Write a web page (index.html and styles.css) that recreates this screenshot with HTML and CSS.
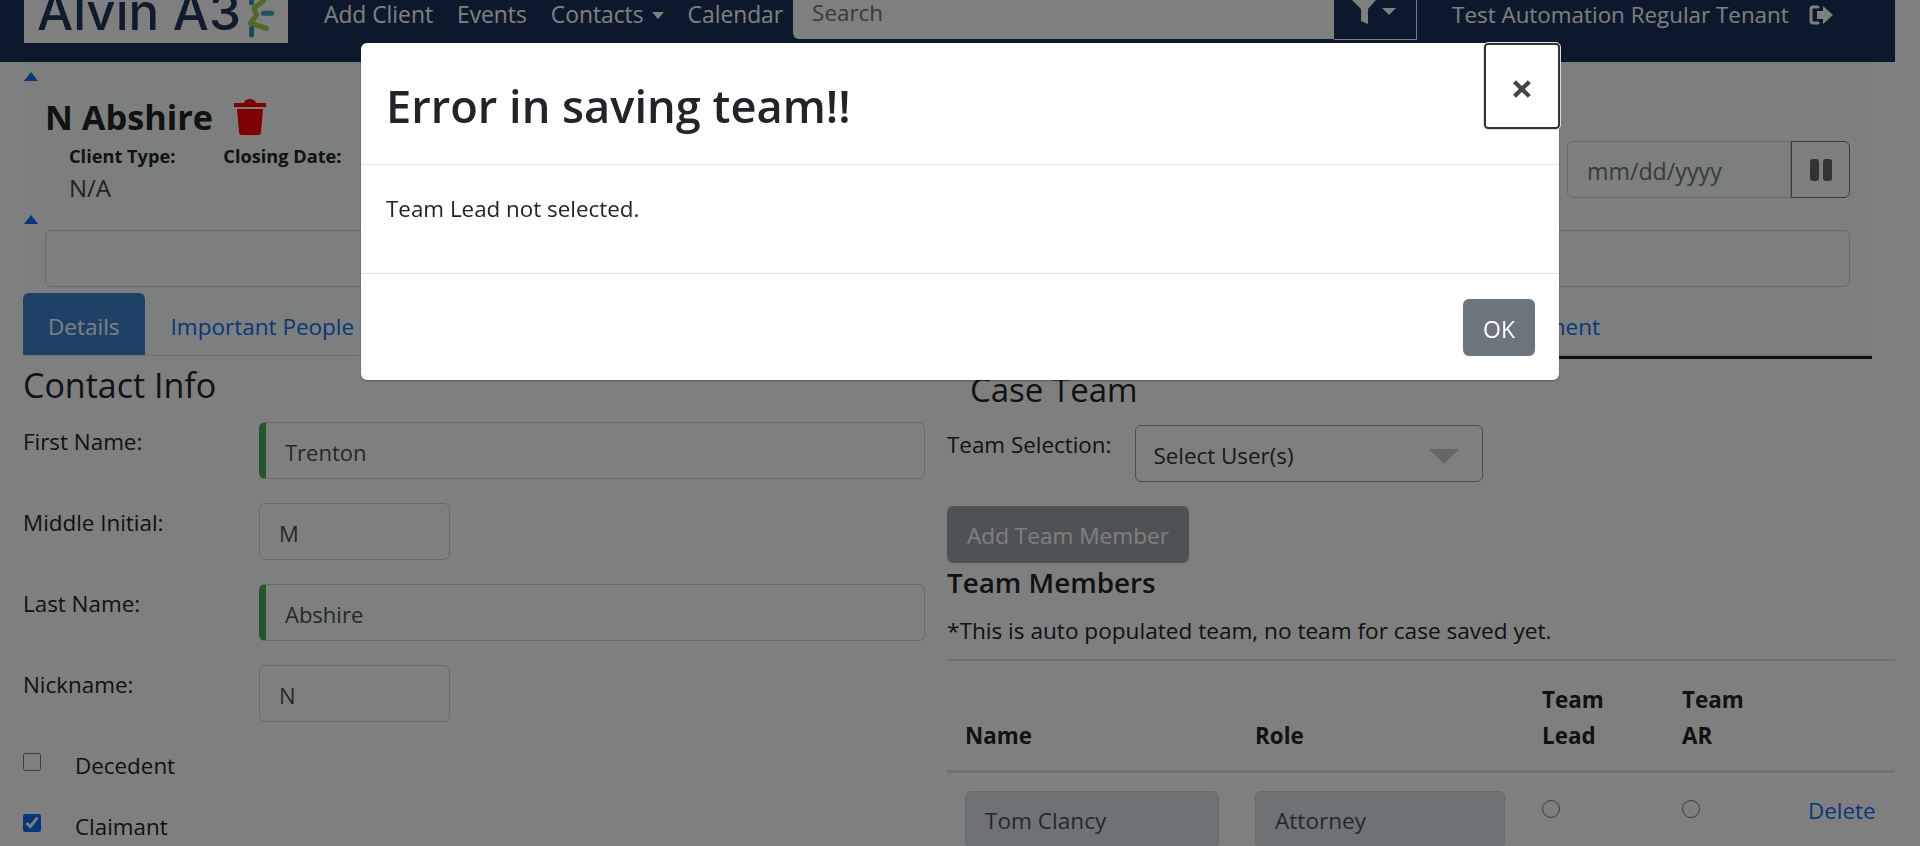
FILE: index.html
```html
<!DOCTYPE html>
<html lang="en">
<head>
  <meta charset="UTF-8">
  <title>Alvin A3</title>
  <link rel="stylesheet" href="styles.css">
</head>
<body>

  <div class="page">
    <!-- Top nav -->
    <div class="topnav">
      <div class="logo">
        <span>Alvin A3</span>
        <svg class="logo-mark" width="28" height="38" viewBox="0 0 28 38">
          <path d="M4.6 -2 V3" stroke="#2a9cb0" stroke-width="5" stroke-linecap="round"/>
          <path d="M16.3 1 L7 8.3 L9.5 15 L3.5 23.3 L19.7 28.5" fill="none" stroke="#a4d24a" stroke-width="5" stroke-linecap="round" stroke-linejoin="round"/>
          <path d="M16.3 13.3 H24.7" stroke="#2fb0c8" stroke-width="5" stroke-linecap="round"/>
          <path d="M4.6 28.3 V35" stroke="#2a9cb0" stroke-width="5" stroke-linecap="round"/>
        </svg>
      </div>
      <a class="navlink link-add">Add Client</a>
      <a class="navlink">Events</a>
      <a class="navlink">Contacts<i class="caret"></i></a>
      <a class="navlink">Calendar</a>
      <div class="search">Search</div>
      <div class="filter">
        <svg width="24" height="24" viewBox="0 0 24 24"><path d="M0 0 H24 L16 9 V24 L9 21 V9 Z" fill="#fff"/></svg>
        <i class="caret"></i>
      </div>
      <div class="tenant">Test Automation Regular Tenant</div>
      <svg class="logout" width="24" height="22" viewBox="0 0 24 22">
        <path d="M9 3 H4 Q2 3 2 5 V17 Q2 19 4 19 H9" fill="none" stroke="#fff" stroke-width="3" stroke-linecap="round"/>
        <path d="M8 7 H14 V2 L24 11 L14 20 V15 H8 Z" fill="#fff"/>
      </svg>
    </div>

    <!-- Client header panel -->
    <div class="panel">
      <div class="toggle"></div>
      <div class="client-row">
        <div>
          <div class="client-name">N Abshire
            <svg class="trash" width="32" height="36" viewBox="0 0 32 36">
              <path d="M0 4 H10 Q11 0 16 0 Q21 0 22 4 H32 V8 H0 Z" fill="#ff0000"/>
              <path d="M3 10 H29 L27 33 Q27 36 24 36 H8 Q5 36 5 33 Z" fill="#ff0000"/>
            </svg>
          </div>
          <div class="client-meta">
            <div class="meta-col">
              <div class="meta-label">Client Type:</div>
              <div class="meta-value">N/A</div>
            </div>
            <div class="meta-col">
              <div class="meta-label">Closing Date:</div>
            </div>
          </div>
        </div>
        <div class="date-group">
          <div class="date-input">mm/dd/yyyy</div>
          <div class="date-btn">
            <svg width="22" height="22" viewBox="0 0 22 22">
              <rect x="0" y="0" width="9" height="22" rx="3" fill="#666"/>
              <rect x="13" y="0" width="9" height="22" rx="3" fill="#666"/>
            </svg>
          </div>
        </div>
      </div>
      <div class="toggle toggle-second"></div>
      <div class="notes"></div>
      <div class="tabs">
        <a class="tab active">Details</a>
        <a class="tab">Important People</a>
        <a class="tab tab-last">Settlement</a>
      </div>
      <div class="tab-rule"></div>
    </div>

    <!-- Details -->
    <div class="columns">
      <div class="col-left">
        <div class="section-title">Contact Info</div>
        <div class="form-row">
          <label class="form-label">First Name:</label>
          <div class="field required">Trenton</div>
        </div>
        <div class="form-row">
          <label class="form-label">Middle Initial:</label>
          <div class="field small">M</div>
        </div>
        <div class="form-row">
          <label class="form-label">Last Name:</label>
          <div class="field required">Abshire</div>
        </div>
        <div class="form-row last-row">
          <label class="form-label">Nickname:</label>
          <div class="field small">N</div>
        </div>
        <div class="check-row"><input type="checkbox"><span>Decedent</span></div>
        <div class="check-row"><input type="checkbox" checked><span>Claimant</span></div>
      </div>

      <div class="col-right">
        <div class="section-title case-title">Case Team</div>
        <div class="team-select-row">
          <label>Team Selection:</label>
          <div class="field select">Select User(s)<i class="select-arrow"></i></div>
        </div>
        <div class="btn-disabled">Add Team Member</div>
        <div class="members-title">Team Members</div>
        <div class="members-note">*This is auto populated team, no team for case saved yet.</div>
        <table class="team-table">
          <thead>
            <tr>
              <th class="c-name">Name</th>
              <th class="c-role">Role</th>
              <th class="c-lead">Team<br>Lead</th>
              <th class="c-ar">Team<br>AR</th>
              <th></th>
            </tr>
          </thead>
          <tbody>
            <tr>
              <td><div class="field readonly">Tom Clancy</div></td>
              <td><div class="field readonly">Attorney</div></td>
              <td><input type="radio" name="lead"></td>
              <td><input type="radio" name="ar"></td>
              <td><a class="delete">Delete</a></td>
            </tr>
          </tbody>
        </table>
      </div>
    </div>
  </div>

  <div class="backdrop"></div>

  <!-- Error modal -->
  <div class="modal">
    <div class="modal-header">
      <div class="modal-title">Error in saving team!!</div>
      <div class="modal-close">×</div>
    </div>
    <div class="modal-body">Team Lead not selected.</div>
    <div class="modal-footer"><div class="btn-ok">OK</div></div>
  </div>

</body>
</html>
```

FILE: styles.css
```css
html, body {
    margin: 0;
    height: 846px;
    overflow: hidden;
    background: #fff;
}
body {
    font-family: "Open Sans", sans-serif;
    font-size: 22.4px;
    line-height: 30px;
    color: #212529;
}
.page {
    width: 1895px;
}

/* nav */
.topnav {
    display: flex;
    align-items: flex-start;
    height: 62px;
    background: #193258;
    overflow: hidden;
}
.logo {
    display: flex;
    align-items: flex-end;
    width: 264px;
    height: 43px;
    margin-left: 24px;
    padding: 0 0 5px 13px;
    box-sizing: border-box;
    background: #fff;
    overflow: hidden;
    color: #1e3860;
    font-family: "Inter", sans-serif;
    font-size: 51px;
    font-weight: 500;
    line-height: 53px;
    flex-shrink: 0;
}
.logo span {
    white-space: nowrap;
}
.logo-mark {
    align-self: flex-start;
    margin-left: 6px;
    flex-shrink: 0;
}
.navlink {
    margin-right: 24px;
    color: #fff;
    font-size: 22.8px;
    line-height: 30px;
    white-space: nowrap;
}
.link-add {
    margin-left: 36px;
}
.caret {
    display: inline-block;
    margin-left: 8px;
    vertical-align: 4px;
    border-top: 7px solid #fff;
    border-left: 6px solid transparent;
    border-right: 6px solid transparent;
}
.search {
    width: 541px;
    height: 39px;
    margin-left: -14px;
    padding-left: 19px;
    box-sizing: border-box;
    background: #fff;
    border-radius: 0 0 0 6px;
    color: #6c757d;
    line-height: 26px;
    flex-shrink: 0;
}
.filter {
    display: flex;
    align-items: flex-start;
    box-sizing: border-box;
    width: 83px;
    height: 40px;
    padding-left: 18px;
    border-right: 1px solid #fff;
    border-bottom: 1px solid #fff;
    flex-shrink: 0;
}
.filter .caret {
    margin: 8px 0 0 6px;
    border-top-width: 7px;
    border-left-width: 7px;
    border-right-width: 7px;
}
.tenant {
    margin-left: 35px;
    color: #fff;
    white-space: nowrap;
    font-size: 22.4px;
}
.logout {
    margin: 4px 0 0 20px;
}

/* client panel */
.panel {
    margin-left: 24px;
    width: 1848px;
    height: 297px;
    position: relative;
    background: #f8fffb;
}
.toggle {
    width: 0;
    height: 0;
    position: absolute;
    left: 0;
    top: 10px;
    border-left: 7px solid transparent;
    border-right: 7px solid transparent;
    border-bottom: 9px solid #0d6efd;
}
.toggle-second {
    top: 153px;
}
.client-row {
    display: flex;
    justify-content: space-between;
    height: 168px;
    padding: 31px 22px 0 21px;
    box-sizing: border-box;
}
.client-name {
    display: flex;
    align-items: center;
    font-size: 34.3px;
    line-height: 48px;
    font-weight: 700;
}
.trash {
    margin-left: 21px;
}
.client-meta {
    display: flex;
    margin: 2px 0 0 24px;
}
.meta-col {
    margin-right: 48px;
}
.meta-label {
    font-size: 18.2px;
    line-height: 26px;
    font-weight: 700;
}
.meta-value {
    margin-top: 4px;
    font-size: 24px;
    color: #444;
}
.date-group {
    display: flex;
    height: 57px;
    margin-top: 48px;
}
.date-input {
    width: 224px;
    padding: 14px 0 0 19px;
    box-sizing: border-box;
    border: 1px solid #ced4da;
    border-radius: 6px 0 0 6px;
    color: #6c757d;
    font-size: 23.2px;
}
.date-btn {
    display: flex;
    align-items: center;
    justify-content: center;
    width: 59px;
    box-sizing: border-box;
    border: 1px solid #6c757d;
    border-radius: 0 6px 6px 0;
}
.notes {
    height: 57px;
    margin: 0 22px 0 21px;
    border: 1px solid #ced4da;
    border-radius: 6px;
    box-sizing: border-box;
}
.tabs {
    display: flex;
    height: 63px;
    margin-top: 6px;
    box-sizing: border-box;
    border-bottom: 1px solid #dee2e6;
}
.tab {
    padding: 19px 25px 0;
    color: #0d6efd;
    font-size: 22.5px;
}
.tab.active {
    margin-left: -1px;
    margin-right: 1px;
    background: #3d85cc;
    color: #fff;
    border-radius: 6px 6px 0 0;
}
.tab-last {
    margin-left: auto;
    margin-right: 247px;
}
.tab-rule {
    height: 3px;
    margin-left: 1000px;
    background: #222;
}

/* details columns */
.columns {
    display: flex;
}
.col-left {
    width: 925px;
    padding-left: 23px;
    box-sizing: border-box;
    flex-shrink: 0;
}
.col-right {
    width: 948px;
    margin-left: 22px;
    flex-shrink: 0;
}
.section-title {
    margin-top: 4px;
    font-size: 34px;
    line-height: 44px;
}
.case-title {
    margin: 9px 0 0 23px;
    font-size: 33px;
}
.form-row {
    display: flex;
    height: 81px;
}
.last-row {
    height: 71px;
}
.col-left .section-title + .form-row {
    margin-top: 15px;
}
.form-label {
    width: 236px;
    flex-shrink: 0;
    line-height: 40px;
}
.field {
    box-sizing: border-box;
    height: 57px;
    padding: 14px 0 0 19px;
    border: 1px solid #ced4da;
    border-radius: 6px;
    color: #495057;
    font-size: 22px;
}
.required {
    flex: 1;
    padding-left: 19px;
    border-left: 7px solid #46ad50;
}
.small {
    width: 191px;
}
.check-row {
    display: flex;
    align-items: center;
    height: 60.6px;
}
.check-row input {
    width: 18px;
    height: 18px;
    margin: -8px 34px 0 0;
    accent-color: #0d6efd;
}
.team-select-row {
    display: flex;
    margin-top: 13px;
    height: 81px;
}
.team-select-row label {
    line-height: 40px;
    margin-right: 24px;
}
.select {
    position: relative;
    width: 348px;
    padding: 15px 0 0 17px;
    border-color: #999;
    color: #333;
    background: #fff;
    font-size: 22.4px;
}
.select-arrow {
    position: absolute;
    right: 23px;
    top: 23px;
    border-top: 15px solid #ccc;
    border-left: 15px solid transparent;
    border-right: 15px solid transparent;
}
.btn-disabled {
    width: 242px;
    height: 57px;
    box-sizing: border-box;
    padding-top: 15px;
    text-align: center;
    background: #6c757d;
    opacity: .65;
    color: #fff;
    border-radius: 6px;
    font-size: 22.6px;
}
.members-title {
    margin-top: -1px;
    font-size: 27.8px;
    line-height: 40px;
    font-weight: 600;
}
.members-note {
    margin-top: 14px;
    font-size: 22.6px;
    padding-bottom: 13px;
}
.team-table {
    width: 948px;
    table-layout: fixed;
    border-collapse: collapse;
    border-top: 2px solid #dee2e6;
}
.team-table th {
    height: 108px;
    box-sizing: border-box;
    padding: 21px 0 16px 18px;
    text-align: left;
    vertical-align: bottom;
    line-height: 36px;
    font-size: 22.4px;
    border-bottom: 3px solid #dee2e6;
}
.team-table td {
    padding: 18px 0 0 18px;
    vertical-align: top;
}
.c-name { width: 290px; }
.c-role { width: 287px; }
.c-lead { width: 140px; }
.c-ar { width: 126px; }
.team-table input {
    width: 18px;
    height: 18px;
    margin: 9px 0 0;
}
.readonly {
    background: #dfe4ea;
    font-size: 22.6px;
}
.team-table td:first-child .readonly {
    width: 254px;
}
.team-table td:nth-child(2) .readonly {
    width: 250px;
}
.delete {
    color: #0d6efd;
    line-height: 40px;
}

/* modal */
.backdrop {
    position: fixed;
    left: 0;
    top: 0;
    width: 1920px;
    height: 846px;
    background: rgba(0, 0, 0, .5);
}
.modal {
    position: fixed;
    left: 361px;
    top: 43px;
    width: 1198px;
    height: 337px;
    display: flex;
    flex-direction: column;
    background: #fff;
    border-radius: 6px;
    box-shadow: 0 1px 2px rgba(0, 0, 0, .3);
}
.modal-header {
    display: flex;
    justify-content: space-between;
    box-sizing: border-box;
    height: 122px;
    padding-left: 25px;
    border-bottom: 1px solid #dee2e6;
}
.modal-title {
    margin-top: 36px;
    font-size: 45.2px;
    line-height: 54px;
    font-weight: 600;
}
.modal-close {
    display: flex;
    align-items: center;
    justify-content: center;
    box-sizing: border-box;
    width: 76px;
    height: 86px;
    margin-right: -1px;
    padding-top: 4px;
    border: 2px solid #333;
    outline: 1px solid #ddd;
    border-radius: 4px;
    background: #fff;
    font-size: 40px;
    font-weight: 700;
    color: #444;
}
.modal-body {
    box-sizing: border-box;
    height: 109px;
    padding: 29px 25px 0;
    border-bottom: 1px solid #dee2e6;
}
.modal-footer {
    display: flex;
    justify-content: flex-end;
    padding: 25px 24px 0 0;
}
.btn-ok {
    width: 72px;
    height: 57px;
    box-sizing: border-box;
    padding-top: 15px;
    text-align: center;
    background: #6c757d;
    border-radius: 6px;
    color: #fff;
    font-size: 23px;
}
```
